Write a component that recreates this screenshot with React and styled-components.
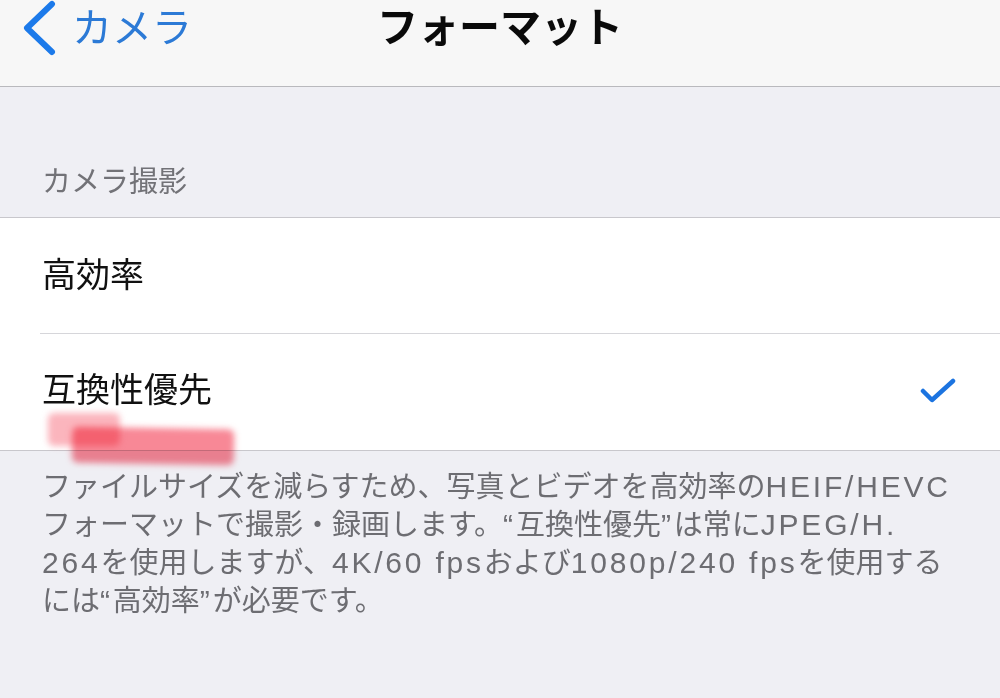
import React from 'react';
import styled, { createGlobalStyle } from 'styled-components';

const GlobalStyle = createGlobalStyle`
  html, body {
    margin: 0;
    padding: 0;
    background: #efeff4;
  }
  body {
    font-family: 'Liberation Sans', 'Noto Sans CJK JP', sans-serif;
  }
`;

const Page = styled.div`
  position: relative;
  width: 1000px;
  height: 698px;
  overflow: hidden;
  background: #efeff4;
`;

const NavBar = styled.header`
  height: 86px;
  background: #f7f7f7;
  border-bottom: 1px solid #b9b9bd;
  display: grid;
  grid-template-columns: 1fr auto 1fr;
  align-items: start;
`;

const BackButton = styled.div`
  display: flex;
  align-items: center;
  height: 56px;
  padding-left: 22px;
  gap: 14px;
  color: #2c7ad6;
  font-size: 40px;
  line-height: 50px;
`;

const Title = styled.h1`
  margin: 0;
  height: 56px;
  display: flex;
  align-items: center;
  font-size: 41px;
  line-height: 50px;
  font-weight: 700;
  color: #0a0a0a;
`;

const SectionHeader = styled.div`
  height: 130px;
  display: flex;
  align-items: flex-end;
  padding: 0 42px 17px;
  box-sizing: border-box;
  color: #727277;
  font-size: 29px;
  line-height: 35px;
`;

const Group = styled.section`
  background: #fff;
  border-top: 1px solid #c8c7cc;
  border-bottom: 1px solid #c8c7cc;
  padding-left: 40px;
`;

const Row = styled.div`
  height: 116px;
  display: flex;
  align-items: center;
  justify-content: space-between;
  padding-right: 44px;
  box-sizing: border-box;
  border-bottom: ${(p) => (p.last ? 'none' : '1px solid #d6d6da')};
`;

const RowLabel = styled.span`
  font-size: 34px;
  line-height: 44px;
  color: #111;
  padding-left: 2px;
  margin-top: ${(p) => (p.last ? '-4px' : '-2px')};
`;

const Footer = styled.p`
  margin: 0;
  padding: 17px 42px 0;
  color: #6d6d72;
  font-size: 29px;
  line-height: 37px;
  white-space: nowrap;
`;

// iOS renders the latin runs noticeably wider than the kana around them
const Latin = styled.span`
  font-family: 'Liberation Sans', sans-serif;
  font-size: 30px;
  letter-spacing: 2.8px;
`;

const Marker = styled.div`
  position: absolute;
  left: ${(p) => p.x}px;
  top: ${(p) => p.y}px;
  width: ${(p) => p.w}px;
  height: ${(p) => p.h}px;
  background: ${(p) => p.color};
  border-radius: 6px;
  filter: blur(3px);
  mix-blend-mode: multiply;
  transform: rotate(${(p) => p.r || 0}deg);
`;

function Chevron() {
  return (
    <svg width="36" height="56" viewBox="0 0 36 56">
      <path
        d="M30 4 L5 28 L30 52"
        fill="none"
        stroke="#1c7aea"
        strokeWidth="6"
        strokeLinecap="round"
        strokeLinejoin="round"
      />
    </svg>
  );
}

function Check() {
  return (
    <svg width="36" height="28" viewBox="0 0 36 28">
      <path
        d="M3 13 L12 22 L33 3"
        fill="none"
        stroke="#1c74e0"
        strokeWidth="4.5"
        strokeLinecap="round"
        strokeLinejoin="round"
      />
    </svg>
  );
}

export default function App() {
  return (
    <Page>
      <GlobalStyle />
      <NavBar>
        <BackButton>
          <Chevron />
          <span>カメラ</span>
        </BackButton>
        <Title>フォーマット</Title>
        <div />
      </NavBar>
      <SectionHeader>カメラ撮影</SectionHeader>
      <Group>
        <Row>
          <RowLabel>高効率</RowLabel>
        </Row>
        <Row last>
          <RowLabel last>互換性優先</RowLabel>
          <Check />
        </Row>
      </Group>
      <Footer>
        ファイルサイズを減らすため、写真とビデオを高効率の<Latin>HEIF/HEVC</Latin>
        <br />
        フォーマットで撮影・録画します。<Latin>“</Latin>互換性優先<Latin>”</Latin>は常に
        <Latin>JPEG/H.</Latin>
        <br />
        <Latin>264</Latin>を使用しますが、<Latin>4K/60 fps</Latin>および
        <Latin>1080p/240 fps</Latin>を使用する
        <br />
        には<Latin>“</Latin>高効率<Latin>”</Latin>が必要です。
      </Footer>
      <Marker x={48} y={413} w={72} h={33} color="rgba(247, 120, 135, 0.55)" />
      <Marker x={72} y={428} w={162} h={36} r={1} color="rgba(245, 85, 105, 0.7)" />
    </Page>
  );
}
